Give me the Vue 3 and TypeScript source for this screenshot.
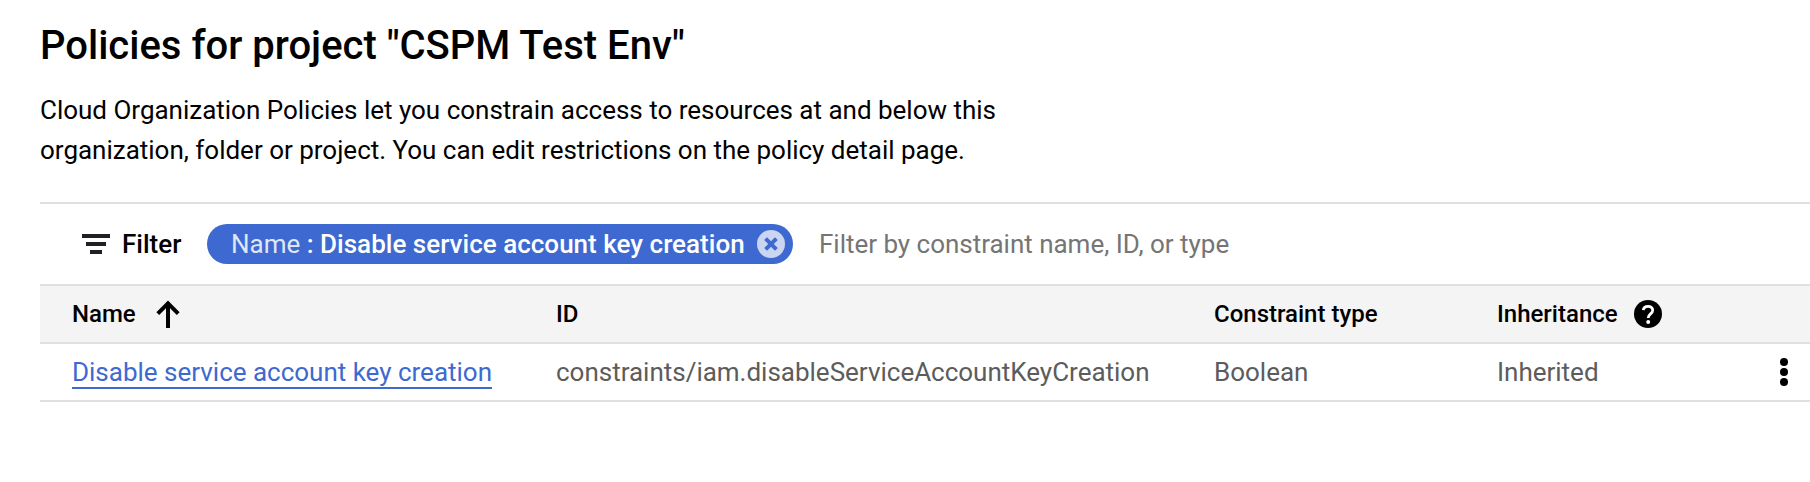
<script setup lang="ts">
const columns = { name: 'Name', id: 'ID', type: 'Constraint type', inheritance: 'Inheritance' }
const policy = {
  name: 'Disable service account key creation',
  id: 'constraints/iam.disableServiceAccountKeyCreation',
  type: 'Boolean',
  inheritance: 'Inherited',
}
</script>

<template>
  <main class="page">
    <h1>Policies for project "CSPM Test Env"</h1>
    <p class="intro">Cloud Organization Policies let you constrain access to resources at and below this<br />organization, folder or project. You can edit restrictions on the policy detail page.</p>
    <section class="panel">
      <div class="filter">
        <svg class="filter-icon" width="28" height="20" viewBox="0 0 28 20"><path d="M0 0h28v4H0zM4 8h20v4H4zM8 16h12v4H8z" /></svg>
        <span class="filter-label">Filter</span>
        <span class="chip">
          <span class="chip-text">Name <b>: {{ policy.name }}</b></span>
          <svg class="chip-close" width="28" height="28" viewBox="0 0 28 28"><circle cx="14" cy="14" r="14" fill="#cad5f2" /><path d="M8.6 8.6l10.8 10.8M19.4 8.6L8.6 19.4" stroke="#3e69d0" stroke-width="4" /></svg>
        </span>
        <span class="hint">Filter by constraint name, ID, or type</span>
      </div>
      <div class="row head">
        <span class="cell">{{ columns.name }}<svg class="arrow" width="24" height="28" viewBox="0 0 24 28"><path d="M12 28V4M1.8 13.6L12 3.4l10.2 10.2" fill="none" stroke="#000" stroke-width="4" /></svg></span>
        <span class="cell">{{ columns.id }}</span>
        <span class="cell">{{ columns.type }}</span>
        <span class="cell">{{ columns.inheritance }}<svg class="help" width="28" height="28" viewBox="0 0 28 28"><circle cx="14" cy="14" r="14" /><path d="M9.3 10.2C9.6 7.7 11.5 6.4 14 6.4c2.7 0 4.7 1.5 4.7 3.9 0 3.6-4.5 3.7-4.5 7.7" fill="none" stroke="#fff" stroke-width="2.8" /><circle cx="14.2" cy="22" r="2" fill="#fff" /></svg></span>
      </div>
      <div class="row body">
        <span class="cell"><a class="link">{{ policy.name }}</a></span>
        <span class="cell">{{ policy.id }}</span>
        <span class="cell">{{ policy.type }}</span>
        <span class="cell">{{ policy.inheritance }}</span>
        <svg class="more" width="8" height="28" viewBox="0 0 8 28"><circle cx="4" cy="4" r="4" /><circle cx="4" cy="14" r="4" /><circle cx="4" cy="24" r="4" /></svg>
      </div>
    </section>
  </main>
</template>

<style>
body { background: #fff; overflow: hidden; }
</style>
<style scoped>
.page { box-sizing: border-box; height: 482px; padding: 22px 0 0 40px; font-family: Roboto, sans-serif; color: #000; white-space: nowrap; }
h1 { margin: 0; font-size: 40px; line-height: 48px; font-weight: 500; }
.intro { margin: 20px 0 0; font-size: 26px; line-height: 40px; letter-spacing: -0.01px; }
.panel { margin-top: 32px; border-top: 2px solid #e0e0e0; }
.filter { display: flex; align-items: center; height: 80px; padding-left: 42px; font-size: 26px; }
.filter-icon { fill: #202124; }
.filter-label { font-weight: 500; margin-left: 12px; width: 85px; }
.chip { display: flex; align-items: center; justify-content: space-between; box-sizing: border-box; width: 586px; height: 40px; padding: 0 8px 0 24px; border-radius: 20px; background: #3e69d0; color: #dfe6f8; }
.chip b { font-weight: 500; color: #fff; letter-spacing: 0.015px; }
.hint { margin-left: 26px; color: #757575; letter-spacing: -0.02px; }
.row { display: grid; grid-template-columns: 484px 658px 283px 283px 1fr; align-items: center; box-sizing: border-box; padding-left: 32px; height: 58px; border-bottom: 2px solid #e0e0e0; }
.head { border-top: 2px solid #e0e0e0; height: 60px; background: #f4f4f4; font-size: 24px; font-weight: 500; }
.body { font-size: 26px; color: #5c5c5c; letter-spacing: -0.01px; }
.cell { display: flex; align-items: center; }
.arrow { margin-left: 20px; }
.help { margin-left: 16px; }
.link { margin-top: 2px; color: #3e69d0; border-bottom: 2px solid #3e69d0; line-height: 30px; }
.more { fill: #000; }
</style>
